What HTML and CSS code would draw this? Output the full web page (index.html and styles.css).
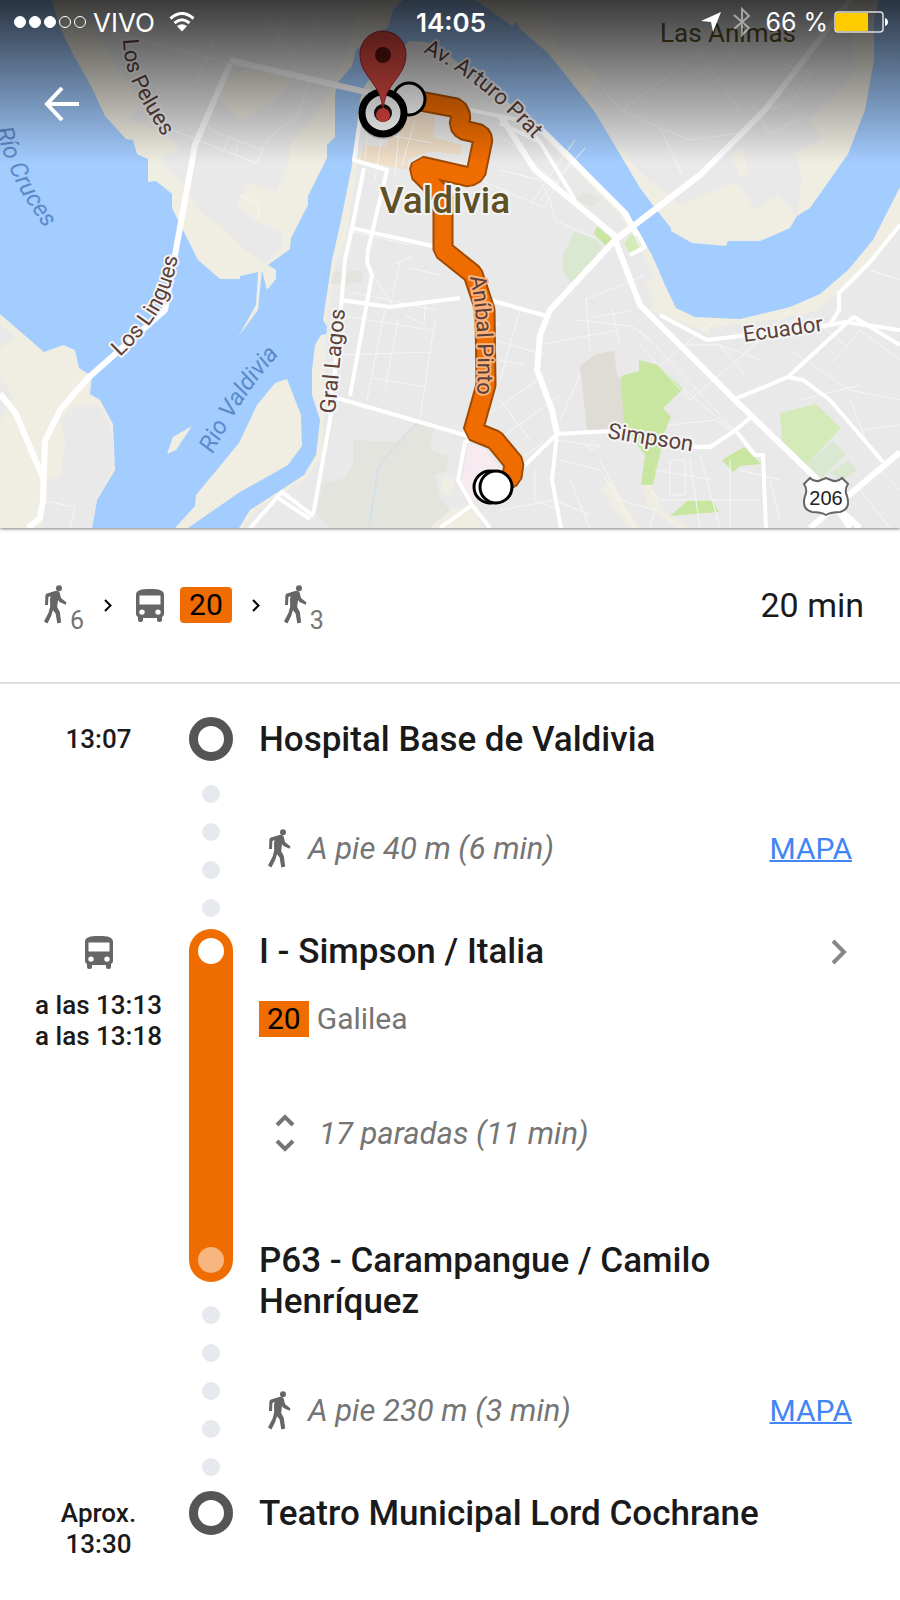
FILE: index.html
```html
<!DOCTYPE html>
<html lang="es">
<head>
    <meta charset="UTF-8">
    <meta name="viewport" content="width=device-width, initial-scale=1.0">
    <title>Hospital Base de Valdivia - Teatro Municipal Lord Cochrane</title>
    <link rel="stylesheet" href="styles.css">
</head>
<body>
    <!-- shared icons -->
    <svg class="sprite" aria-hidden="true">
        <symbol id="walk" viewBox="0 0 23 39">
            <circle cx="15" cy="3.2" r="3"/>
            <path d="M1 20L1.4 10.5Q1.6 9 3 8.5L12 5.7Q15 5.4 15.8 8L17 13L22.5 17.4L21.6 19.8L15.5 17L14 15L13.2 22L15.8 27L17.2 37.4L13.3 38.4L11.6 28.6L9 25.2L7.2 31L3.4 38.4L0 36.6L4.6 27.6L6.2 21.5L6 14.4L6.6 10.9L4.4 12L4 20Z"/>
        </symbol>
        <symbol id="bus" viewBox="0 0 28 33">
            <path fill-rule="evenodd" d="M0 6C0 1 5 0 14 0S28 1 28 6V25Q28 27 26 28V31Q26 33 24 33H23Q21 33 21 31V29H7V31Q7 33 5 33H4Q2 33 2 31V28Q0 27 0 25ZM3.500 6.500V15.500H24.500V6.500ZM6 20.400A2.700 2.700 0 1 0 6 25.800A2.700 2.700 0 1 0 6 20.400ZM22 20.400A2.700 2.700 0 1 0 22 25.800A2.700 2.700 0 1 0 22 20.400Z"/>
        </symbol>
        <symbol id="chevron" viewBox="0 0 16 26">
            <path d="M2 2L13 13L2 24" fill="none" stroke="currentColor" stroke-width="4"/>
        </symbol>
    </svg>

    <header class="hero">
        <svg class="map" viewBox="0 0 900 528" role="img" aria-label="Mapa de Valdivia">
            <defs>
                <path id="p-pelues" d="M123 39C124 72 134 90 160 132L172 152"/>
                <path id="p-cruces" d="M-4 129C7 170 22 198 48 232L60 248"/>
                <path id="p-lingues" d="M120 357C148 330 174 302 179 245"/>
                <path id="p-rio" d="M213 454C227 425 250 385 284 349"/>
                <path id="p-gral" d="M335 414L346 300"/>
                <path id="p-prat" d="M423 52C460 70 494 96 536 142"/>
                <path id="p-anibal" d="M470 277C477 310 479 350 477 400"/>
                <linearGradient id="shade" x1="0" y1="0" x2="0" y2="1">
                    <stop offset="0" stop-color="#000" stop-opacity=".75"/>
                    <stop offset="1" stop-color="#000" stop-opacity="0"/>
                </linearGradient>
            </defs>

            <rect class="water" width="900" height="528"/>

            <!-- sandy land -->
            <g class="sand">
                <path d="M52 0L60 28L72 52L92 88L105 116L126 139L133 140L137 154L148 159V182L156 181L172 194V208L181 226L198 260L220 279H240V276L258 272L256 305L238 337L258 310L262 270L267 290L276 279V270L268 265L290 249L291 238L308 205V196L327 158V145L335 137V95L338 82L352 66L356 50L372 37L388 27L393 10L403 0Z"/>
                <path d="M0 314L44 352L63 345L75 350L79 368L92 376L90 394L100 400L113 424L115 470L97 500L92 528H0Z"/>
                <path d="M287 379L301 415L302 446L288 465L240 492L188 528H175L195 506L196 495L239 443L257 405L275 383Z"/>
                <path d="M192 426L173 437L167 454L176 450Z"/>
                <path d="M475 0L487 8L512 26L517 22L520 29L548 53L595 112L640 188L655 208L671 228V231L692 243L726 246L728 241H760L790 228L797 216L810 208L848 154L865 110L874 60V20L879 0Z"/>
                <path d="M360 100L352 165L340 225L332 260L323 320L331 333L321 335L315 345L312 370V395L320 420L316 455L304 475L250 510L239 528H900V187L873 240L848 270L820 294L790 307L740 319L695 317L676 308L665 285L652 255L636 228L625 212L570 153L540 127L460 65L436 43L410 41L385 60L365 85Z"/>
            </g>

            <!-- built-up areas -->
            <g class="urban">
                <path d="M75 0H362L345 60L318 110L290 145L288 165L276 192L260 187L248 183L236 207L255 220L282 232V247L265 264L245 250L225 230L200 212L188 190L160 160L180 148L165 135L128 118L142 103L112 60Z"/>
                <path d="M60 420L75 405L98 405L108 420L113 440L114 465L97 500L92 528H43L45 480L60 477L66 440ZM0 325L16 338L0 348ZM0 375L13 398L0 422Z"/>
                <path d="M530 0H850L855 70L832 100L808 120L822 138L795 152L802 180L797 215L778 195L755 210L735 178L750 175L742 147L732 155L740 180L680 205L664 190L650 182L612 140L588 95L600 75L560 50Z"/>
                <path d="M362 102L357 165L345 245L336 262L327 320L324 395L322 455L306 478L255 510L243 528H900V225L875 260L855 282L812 312L760 322L700 328L660 312L645 285L655 275L635 240L620 216L540 134L455 68L436 46L412 44L390 62L370 88Z"/>
            </g>
            <path class="sand" d="M230 70H300L275 100L240 120L215 95ZM655 300L672 312L710 322V335L690 325L650 310ZM642 485H652L662 510L690 528H676L648 505ZM600 488L612 480L625 505L640 528H628ZM440 510L475 505L480 528H430ZM445 475L455 480L450 500L440 490Z"/>
            <path class="downtown" d="M378 110L435 113L433 137L461 145V155L430 151L408 160V170L360 160L364 145L385 147L390 138L372 128Z"/>
            <path class="wood" d="M353 440L395 442L418 421L434 428L430 450L448 456L447 470L435 475L440 498L450 510L430 528H330L317 515L322 484L345 478L353 465Z"/>
            <path class="wood" d="M334 271H362V283L330 284ZM575 198L588 192L600 200L592 207Z"/>
            <path class="grave" d="M580 366L596 354L614 351L617 376L622 378L624 430H587Z"/>
            <path class="clinic" d="M468 443L485 449L508 478L472 502L462 482Z"/>
            <g class="park">
                <path d="M639 360L658 365L683 389L663 408L671 417L664 433L661 450L653 485H641L645 455L624 428L621 376L639 371Z"/>
                <path d="M722 460L744 447L761 464L740 466L733 472ZM670 516L688 500H712L719 512ZM597 226L615 242L607 247L594 234Z"/>
                <path class="park-light" d="M780 413L816 404L841 428L806 465L782 442ZM624 244L632 233L640 249L630 254Z"/>
                <path class="park-pale" d="M806 465L832 441L846 454L820 480ZM830 473L848 460L857 470L842 481ZM574 232L595 238L605 252L572 284L563 272V255Z"/>
            </g>
            <path class="stream" d="M369 528L378 470L383 460L420 420"/>

            <!-- side streets -->
            <path class="lane" d="M250 0L303 67L310 78L298 115L268 138L256 163L160 125M105 30L235 65L325 80M205 85L197 82L213 40M207 125L213 131L262 150M223 152L230 135M235 157L238 140M240 195L259 204V218M322 15L300 60M270 55L288 20M622 110L700 53L745 20M622 110L660 128L690 140L745 132M660 128L682 175M700 55L740 110M758 115L770 135L803 116M530 0L612 100L622 110M770 60L812 73L790 103L757 112M745 25L730 60L700 75"/>
            <path class="lane" d="M362 130L432 143M368 118L365 160M385 115L375 180M400 118L395 175M415 120L402 165M345 230L410 245M340 315L430 330M350 292L436 310M370 270L391 303L400 262M392 265L415 255M405 315L424 325L425 305M372 378L425 387M335 355L434 352M367 400L385 310M385 390L398 320M420 418L435 320M410 268L440 275M500 170L540 180L550 200L555 220L595 238M500 135L560 185M530 205L575 140M480 180L545 208M545 205L570 162M585 148L540 200"/>
            <path class="lane" d="M585 300L645 275M590 318L632 310M586 297L590 350M612 309L620 345M538 345L620 330M575 320L632 326L650 340M495 340L545 355M500 360L525 365M520 310L500 380M500 400L530 440M480 420L545 375M505 435L560 395M640 345L690 400L760 340L790 310M660 365L715 320M680 345L720 345L760 360M683 389L745 440M668 425L715 420L733 432M640 330L735 430M715 340L745 375M555 440L590 445L600 445M560 420L580 375M585 442L590 450L600 446M560 460L600 470L635 528M570 480L590 528M520 460L545 440M535 470V500L560 510M500 510L555 500L590 515M600 460L620 500L655 510L650 528"/>
            <path class="lane" d="M670 460V495H685V460ZM690 460L700 528M700 455L720 528M660 445L710 445M655 470L715 480M650 490L660 500H760M730 460V528M740 470L780 480M770 480L780 520M790 350L850 390L900 400M830 365L860 330L900 360M800 400L860 385M850 400L870 450M860 430L900 425M870 270L900 280M880 470L900 490M860 490L890 528M810 315L850 350M470 310L500 325M45 501L75 507L70 528"/>

            <!-- main streets -->
            <path class="road r4" d="M362 108L354 160L387 170L368 250L367 262L372 275L350 396M364 168L352 228L345 260L340 320L330 420L314 510M352 228L437 247M341 300L390 307L460 298M330 396L475 438M250 528L282 492L312 515L314 510M278 498L310 519M500 123L540 142L575 200M540 142L520 120L470 110M630 255L645 247L637 232"/>
            <path class="road r4" d="M490 300L550 317M660 315L707 340L830 325L845 322L900 330M557 434L610 431M690 447L710 447L733 432L750 418M735 430L755 455L763 455L766 528M735 399L788 377L850 320L854 317L900 345M788 377L803 380L830 400L883 462M830 325L839 310V293L870 262L900 225M561 528L552 480L557 434L525 465L500 487M485 432L465 442L458 480L472 505L490 528M472 505L440 528"/>
            <path class="road r5" d="M230 60L250 65L400 100M230 64L195 145L165 310L88 378L60 410L45 441L43 500L40 518L28 528M0 394L15 412L44 480M850 0L765 110L700 175L615 240L550 310L540 335L537 370L552 410L557 434M615 240L640 305L735 400L820 482L850 528"/>
            <path class="road r5" d="M500 115L535 170L620 240M540 128L625 213L637 235M900 452L810 528M840 510L860 528"/>

            <!-- bus route -->
            <path class="route-edge" d="M420 101L457 108L461 116L459 125L463 130L480 134L483 139L476 173L469 177L421 166L419 172L443 196V250L473 274L485 310L486 385L473 431L495 440L514 463L512 477L500 484"/>
            <path class="route" d="M420 101L457 108L461 116L459 125L463 130L480 134L483 139L476 173L469 177L421 166L419 172L443 196V250L473 274L485 310L486 385L473 431L495 440L514 463L512 477L500 484"/>

            <!-- place and street names -->
            <g class="street">
                <text><textPath href="#p-pelues">Los Pelues</textPath></text>
                <text><textPath href="#p-lingues">Los Lingues</textPath></text>
                <text><textPath href="#p-gral">Gral Lagos</textPath></text>
                <text><textPath href="#p-prat">Av. Arturo Prat</textPath></text>
                <text class="on-route"><textPath href="#p-anibal">Aníbal Pinto</textPath></text>
                <text transform="translate(744 342) rotate(-8)">Ecuador</text>
                <text transform="translate(607 438) rotate(9)">Simpson</text>
            </g>
            <g class="river">
                <text><textPath href="#p-cruces">Río Cruces</textPath></text>
                <text><textPath href="#p-rio">Rio  Valdivia</textPath></text>
            </g>
            <text class="city" x="445" y="213">Valdivia</text>
            <text class="town" x="728" y="42">Las Animas</text>

            <path class="shield" d="M804 484L810 478Q815 483 821 480L826 478L831 480Q837 483 842 478L848 484Q844 490 847 496Q851 509 840 512Q831 512 826 515Q821 512 812 512Q801 509 805 496Q808 490 804 484Z"/>
            <text class="shield-text" x="826" y="505">206</text>

            <!-- stops and destination pin -->
            <ellipse cx="492" cy="491" rx="17" ry="14" fill="#000" opacity=".25"/>
            <g class="stop-dot">
                <circle cx="490" cy="487" r="16"/>
                <circle cx="496" cy="487" r="16"/>
                <circle cx="409" cy="99" r="16"/>
            </g>
            <circle cx="383" cy="115" r="24" fill="#000" opacity=".2"/>
            <circle class="target" cx="383" cy="113" r="21"/>
            <circle cx="383" cy="113" r="9" fill="#111"/>
            <path class="pin" d="M383 112C382 82 360 78 360 54A23 23 0 0 1 406 54C406 78 384 82 383 112Z"/>
            <circle cx="383" cy="55" r="8" fill="#5a1411"/>
            <circle cx="383" cy="115" r="7" fill="#e0443e"/>

            <rect width="900" height="163" fill="url(#shade)"/>
        </svg>

        <div class="status-bar">
            <div class="status-left">
                <span class="signal">
                    <i class="bar-dot on"></i><i class="bar-dot on"></i><i class="bar-dot on"></i><i class="bar-dot"></i><i class="bar-dot"></i>
                </span>
                <span class="carrier">VIVO</span>
                <svg class="wifi" viewBox="0 0 26 20" width="26" height="20">
                    <path d="M1.5 6.5Q13-3.5 24.5 6.5M5.5 11Q13 4.500 20.500 11" fill="none" stroke="#fff" stroke-width="3"/>
                    <path d="M8 14Q13 10.500 18 14L13 19.500Z" fill="#fff"/>
                </svg>
            </div>
            <span class="clock">14:05</span>
            <div class="status-right">
                <svg viewBox="0 0 20 20" width="20" height="20"><path d="M20 0L12 20L10 10L0 9Z" fill="#fff"/></svg>
                <svg class="bluetooth" viewBox="0 0 18 30" width="18" height="30"><path d="M1 8L16 21L9 28V2L16 9L1 22" fill="none" stroke="#fff" stroke-width="2"/></svg>
                <span>66 %</span>
                <svg class="battery" viewBox="0 0 54 22" width="54" height="22">
                    <rect x="1" y="1" width="48" height="20" rx="3" fill="none" stroke="#ddd" stroke-width="1.500"/>
                    <rect x="2" y="2" width="32" height="18" rx="1" fill="#fc0"/>
                    <path d="M51 7Q54 8 54 11T51 15Z" fill="#fff"/>
                </svg>
            </div>
        </div>

        <button type="button" class="back" aria-label="Volver">
            <svg viewBox="0 0 35 34" width="35" height="34"><path d="M18 1L3 17L18 33M3 17H35" fill="none" stroke="#fff" stroke-width="4"/></svg>
        </button>
    </header>

    <main>
        <section class="summary">
            <div class="modes">
                <span class="mode-walk"><svg class="icon-walk"><use href="#walk"/></svg><span class="mins">6</span></span>
                <svg class="sep"><use href="#chevron"/></svg>
                <svg class="icon-bus"><use href="#bus"/></svg>
                <span class="line line-round">20</span>
                <svg class="sep"><use href="#chevron"/></svg>
                <span class="mode-walk"><svg class="icon-walk"><use href="#walk"/></svg><span class="mins">3</span></span>
            </div>
            <span class="total">20 min</span>
        </section>

        <ol class="steps">
            <li class="step">
                <div class="time">13:07</div>
                <div class="rail">
                    <span class="ring"></span>
                    <span class="dots"><i></i><i></i><i></i><i></i></span>
                </div>
                <div class="info">
                    <h2>Hospital Base de Valdivia</h2>
                    <div class="walk-leg">
                        <svg class="icon-walk"><use href="#walk"/></svg>
                        <span class="detail">A pie 40 m (6 min)</span>
                        <a href="#mapa">MAPA</a>
                    </div>
                </div>
            </li>
            <li class="step">
                <div class="time">
                    <svg class="icon-bus"><use href="#bus"/></svg>
                    a las 13:13<br>a las 13:18
                </div>
                <div class="rail ride ride-start"><span class="knob"></span></div>
                <div class="info">
                    <div class="title-row">
                        <h2>I - Simpson / Italia</h2>
                        <svg class="more"><use href="#chevron"/></svg>
                    </div>
                    <div class="service"><span class="line">20</span><span>Galilea</span></div>
                    <button type="button" class="stops">
                        <svg viewBox="0 0 20 40" width="20" height="40"><path d="M2 12L10 4L18 12M2 28L10 36L18 28" fill="none" stroke="#757575" stroke-width="4"/></svg>
                        <span class="detail">17 paradas (11 min)</span>
                    </button>
                </div>
            </li>
            <li class="step">
                <div class="time"></div>
                <div class="rail">
                    <span class="ride ride-end"><span class="knob knob-end"></span></span>
                    <span class="dots"><i></i><i></i><i></i><i></i><i></i></span>
                </div>
                <div class="info">
                    <h2>P63 - Carampangue / Camilo Henríquez</h2>
                    <div class="walk-leg">
                        <svg class="icon-walk"><use href="#walk"/></svg>
                        <span class="detail">A pie 230 m (3 min)</span>
                        <a href="#mapa">MAPA</a>
                    </div>
                </div>
            </li>
            <li class="step">
                <div class="time">Aprox.<br>13:30</div>
                <div class="rail"><span class="ring"></span></div>
                <div class="info"><h2>Teatro Municipal Lord Cochrane</h2></div>
            </li>
        </ol>
    </main>
</body>
</html>
```
FILE: styles.css
```css
* {
    box-sizing: border-box;
}
body {
    margin: 0;
    background: #fff;
    color: #1a1a1a;
    font-family: Roboto, Arial, sans-serif;
}
button {
    border: none;
    background: none;
    padding: 0;
    font: inherit;
    cursor: pointer;
}
.sprite {
    position: absolute;
    width: 0;
    height: 0;
}

/* map */
.hero {
    position: relative;
    box-shadow: 0 1px 3px rgba(0, 0, 0, 0.5);
}
.map {
    display: block;
    width: 100%;
    height: auto;
}
.water { fill: #a3ccff; }
.sand { fill: #f0ede3; }
.urban { fill: #e9e9e9; }
.downtown { fill: #f0dfc8; }
.wood { fill: #e3e4de; }
.grave { fill: #dfdbd5; }
.clinic { fill: #f7eaf0; }
.park { fill: #c9e6a1; }
.park-light { fill: #d5eab9; }
.park-pale { fill: #dae7d1; }
.stream,
.lane,
.road {
    fill: none;
}
.stream {
    stroke: #c5dcf3;
    stroke-width: 1;
}
.lane {
    stroke: #f6f6f6;
    stroke-width: 1;
}
.road {
    stroke: #fff;
    stroke-linejoin: round;
}
.r4 { stroke-width: 4; }
.r5 { stroke-width: 6; }
.route,
.route-edge {
    fill: none;
    stroke-linejoin: bevel;
}
.route {
    stroke: #ef6c00;
    stroke-width: 17;
}
.route-edge {
    stroke: #a04a02;
    stroke-width: 21;
}
.street,
.river,
.city,
.town {
    stroke: #f4f4f4;
    stroke-width: 4;
    stroke-linejoin: round;
    paint-order: stroke;
}
.street {
    font-size: 22px;
    fill: #5c3f39;
}
.on-route {
    stroke: #f9b27c;
}
.river {
    font-size: 24px;
    font-style: italic;
    fill: #5b8ac9;
    stroke: none;
}
.city {
    font-size: 37px;
    font-weight: 500;
    fill: #5f5026;
    text-anchor: middle;
}
.town {
    font-size: 26px;
    fill: #5f5026;
    stroke: none;
    text-anchor: middle;
}
.shield {
    fill: #fff;
    stroke: #666;
    stroke-width: 2;
}
.shield-text {
    font-family: "Liberation Sans", Arial, sans-serif;
    font-size: 20px;
    fill: #222;
    text-anchor: middle;
}
.stop-dot {
    fill: #fff;
    stroke: #000;
    stroke-width: 3;
}
.target {
    fill: #fff;
    stroke: #000;
    stroke-width: 7;
}
.pin {
    fill: #dd4b43;
    stroke: #a3231f;
    stroke-width: 1;
}

/* status bar */
.status-bar {
    position: absolute;
    top: 0;
    left: 0;
    right: 0;
    height: 44px;
    padding: 0 12px 0 14px;
    display: grid;
    grid-template-columns: 1fr auto 1fr;
    align-items: center;
    color: #fff;
    font-family: Inter, sans-serif;
    font-size: 25px;
}
.status-left,
.status-right {
    display: flex;
    align-items: center;
}
.status-right {
    justify-content: flex-end;
    gap: 6px;
}
.signal {
    display: flex;
    gap: 3px;
    margin-right: 7px;
}
.bar-dot {
    width: 12px;
    height: 12px;
    border: 1px solid #fff;
    border-radius: 50%;
}
.bar-dot.on {
    background: #fff;
}
.wifi {
    margin-left: 14px;
}
.carrier,
.clock {
    font-size: 26px;
}
.clock {
    font-weight: 600;
}
.bluetooth {
    margin: 0 8px 0 6px;
    opacity: 0.5;
}
.back {
    position: absolute;
    top: 87px;
    left: 44px;
    height: 34px;
}

/* trip summary */
.summary {
    display: flex;
    align-items: center;
    justify-content: space-between;
    height: 156px;
    padding: 0 36px 0 44px;
    border-bottom: 2px solid #dcdcdc;
}
.modes {
    display: flex;
    align-items: center;
}
.icon-walk {
    width: 23px;
    height: 39px;
    fill: #666;
}
.icon-bus {
    width: 28px;
    height: 33px;
    fill: #666;
}
.mode-walk {
    display: flex;
    padding-top: 5px;
}
.mins {
    margin: 22px 0 -5px 3px;
    font-size: 25px;
    line-height: 28px;
    color: #757575;
}
.sep {
    width: 8px;
    height: 13px;
    margin: 0 24px 0 20px;
    color: #000;
}
.line {
    padding: 0 8px;
    background: #ef6c00;
    color: #000;
    font-size: 30px;
    line-height: 36px;
}
.line-round {
    margin-left: 16px;
    padding: 0 9px;
    border-radius: 4px;
}
.total {
    font-size: 34px;
}

/* steps */
.steps {
    margin: 0;
    padding: 33px 0 32px;
    list-style: none;
}
.step {
    display: grid;
    grid-template-columns: 189px 44px 1fr;
}
.time {
    padding: 7px 0 0 8px;
    font-size: 26px;
    font-weight: 500;
    line-height: 31px;
    text-align: center;
}
.time .icon-bus {
    display: block;
    margin: 0 auto 21px;
}
.ring {
    display: block;
    width: 44px;
    height: 44px;
    border: 9px solid #555;
    border-radius: 50%;
}
.dots {
    display: flex;
    flex-direction: column;
    align-items: center;
    gap: 20px;
    padding-top: 24px;
}
.dots i {
    width: 18px;
    height: 18px;
    border-radius: 50%;
    background: #e6e9ee;
}
.ride {
    display: block;
    padding: 9px;
    background: #ef6c00;
}
.ride-start {
    border-radius: 22px 22px 0 0;
}
.ride-end {
    border-radius: 0 0 22px 22px;
}
.knob {
    display: block;
    width: 26px;
    height: 26px;
    border-radius: 50%;
    background: #fff;
}
.knob-end {
    background: #f7b580;
}
.info {
    padding: 2px 48px 0 26px;
}
h2 {
    margin: 0;
    font-size: 35px;
    font-weight: 500;
    line-height: 41px;
}
.walk-leg {
    display: flex;
    align-items: center;
    height: 40px;
    margin: 68px 0 61px;
    padding-left: 9px;
}
.detail {
    color: #757575;
    font-size: 31px;
    font-style: italic;
}
.walk-leg .detail {
    margin-left: 17px;
}
.walk-leg a {
    margin-left: auto;
    color: #4285f4;
    font-size: 30px;
    text-decoration-thickness: 2px;
}
.title-row {
    display: flex;
    align-items: center;
    justify-content: space-between;
}
.more {
    width: 16px;
    height: 26px;
    margin-right: 5px;
    color: #888;
}
.service {
    display: flex;
    gap: 8px;
    margin-top: 29px;
    color: #757575;
    font-size: 30px;
    line-height: 36px;
}
.stops {
    display: flex;
    align-items: center;
    gap: 24px;
    height: 40px;
    margin: 76px 0 85px;
    padding-left: 16px;
}
```
